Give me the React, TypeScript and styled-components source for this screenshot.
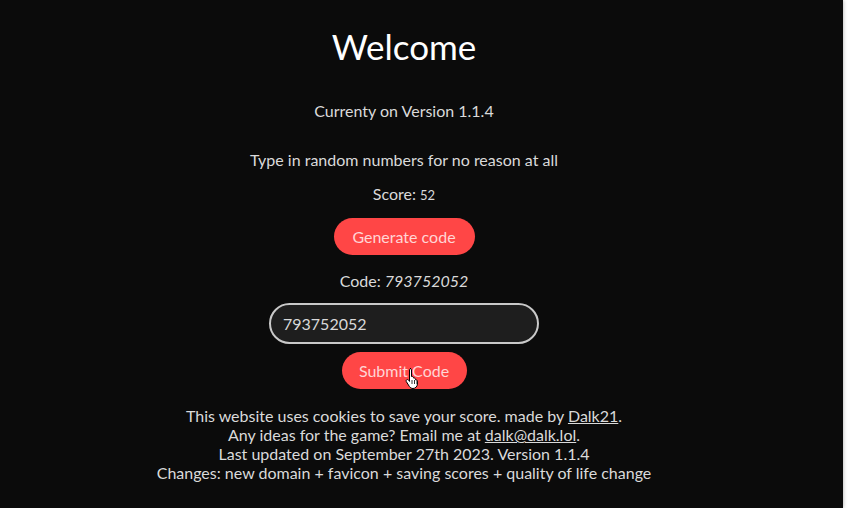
import React, { useState } from "react";
import styled, { createGlobalStyle } from "styled-components";

const GlobalStyle = createGlobalStyle`
  html, body {
    margin: 0;
    padding: 0;
    background: #ffffff;
  }
  body {
    font-family: Lato, "Open Sans", sans-serif;
  }
`;

const Panel = styled.main`
  width: 843px;
  height: 508px;
  box-sizing: border-box;
  background: #0b0b0b;
  box-shadow: 0 0 4px rgba(0, 0, 0, 0.35);
  padding: 26px 35px 0 0;
  display: flex;
  flex-direction: column;
  align-items: center;
  color: #dadada;
`;

const Title = styled.h1`
  margin: 0;
  font-size: 35px;
  line-height: 40px;
  font-weight: 400;
  color: #ffffff;
`;

const Line = styled.p<{ $gap: number }>`
  margin: ${(p) => p.$gap}px 0 0;
  font-size: 16px;
  line-height: 20px;
`;

const Small = styled.span`
  font-size: 13px;
`;

const PillButton = styled.button<{ $gap: number; $width: number }>`
  margin-top: ${(p) => p.$gap}px;
  width: ${(p) => p.$width}px;
  height: 37px;
  border: none;
  border-radius: 19px;
  background: #ff4646;
  color: rgba(255, 255, 255, 0.78);
  font-family: inherit;
  font-size: 16px;
  cursor: pointer;
  position: relative;
`;

const CodeInput = styled.input`
  margin-top: 12px;
  width: 270px;
  height: 41px;
  box-sizing: border-box;
  border: 2px solid #c9c9c9;
  border-radius: 21px;
  background: #1e1e1e;
  color: #d9d9d9;
  font-family: inherit;
  font-size: 16px;
  padding: 0 12px;
  outline: none;
`;

const Footer = styled.footer`
  margin-top: 17px;
  text-align: center;
  font-size: 16px;
  line-height: 19px;
`;

const Link = styled.a`
  color: inherit;
  text-decoration: underline;
`;

const Cursor = styled.svg`
  position: absolute;
  left: 62px;
  top: 15px;
  pointer-events: none;
`;

export default function App() {
  const [code, setCode] = useState("793752052");
  return (
    <>
      <GlobalStyle />
      <Panel>
        <Title>Welcome</Title>
        <Line $gap={35}>Currenty on Version 1.1.4</Line>
        <Line $gap={29}>Type in random numbers for no reason at all</Line>
        <Line $gap={14}>
          Score: <Small>52</Small>
        </Line>
        <PillButton $gap={13} $width={141}>Generate code</PillButton>
        <Line $gap={16}>
          Code: <i>793752052</i>
        </Line>
        <CodeInput value={code} onChange={(e) => setCode(e.target.value)} />
        <PillButton $gap={8} $width={125}>
          Submit Code
          <Cursor width="17" height="23" viewBox="0 0 17 23">
            <path
              d="M6 1.5c.8 0 1.5.7 1.5 1.5v6.5h.5c.8 0 1.5.5 1.5 1.2v.3h.5c.8 0 1.5.5 1.5 1.2v.6h.4c.8 0 1.5.6 1.5 1.4V17c0 2.5-2 4.5-4.5 4.5H9c-1.5 0-2.8-.8-3.6-2L2.3 14.6c-.4-.7-.2-1.5.5-1.9.6-.4 1.4-.2 1.8.4l.9 1.3V3c0-.8.7-1.5 1.5-1.5z"
              fill="#fff"
              stroke="#000"
              strokeWidth="1"
            />
            <path d="M8 13v4M10.5 13v4M13 13.5v3.5" stroke="#000" strokeWidth="0.8" />
          </Cursor>
        </PillButton>
        <Footer>
          This website uses cookies to save your score. made by <Link href="#">Dalk21</Link>.
          <br />
          Any ideas for the game? Email me at <Link href="#">dalk@dalk.lol</Link>.
          <br />
          Last updated on September 27th 2023. Version 1.1.4
          <br />
          Changes: new domain + favicon + saving scores + quality of life change
        </Footer>
      </Panel>
    </>
  );
}
